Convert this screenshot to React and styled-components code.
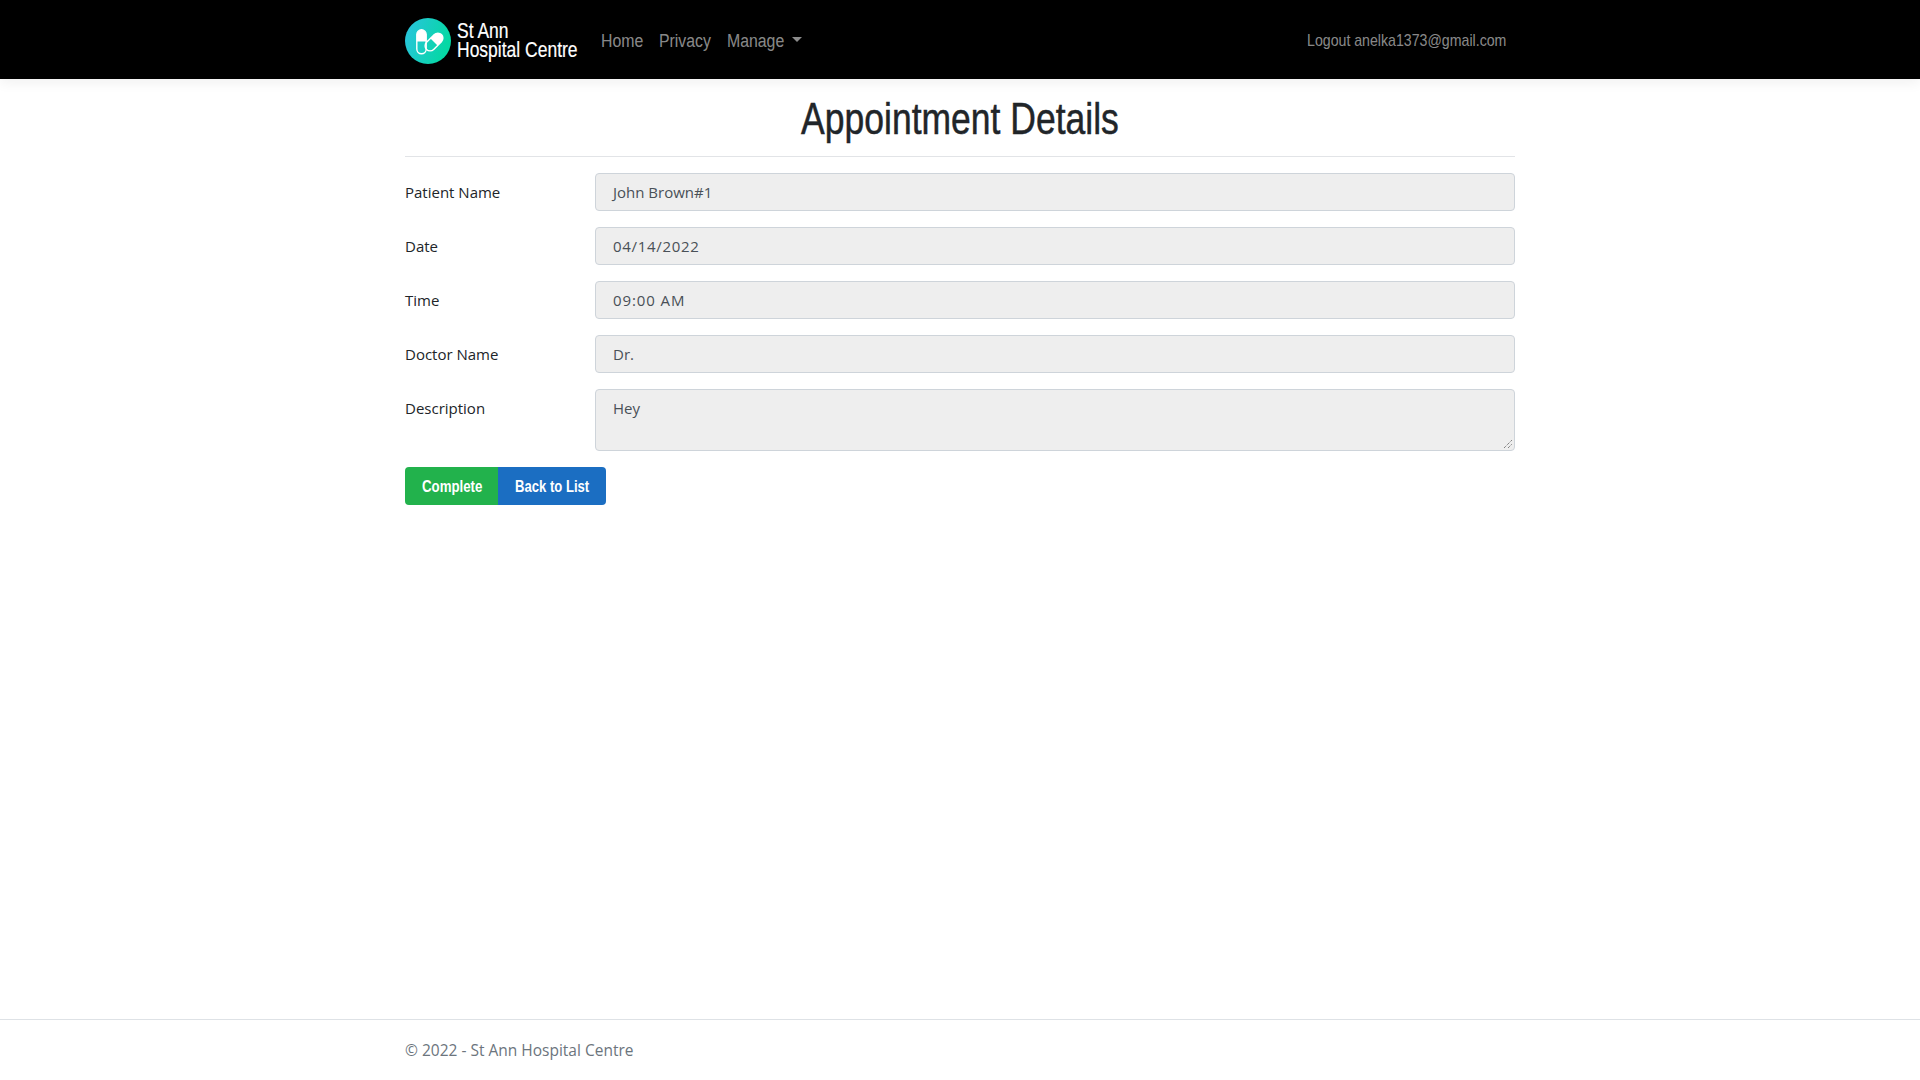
import React from 'react';
import styled, { createGlobalStyle } from 'styled-components';

const narrowFont = '"Liberation Sans", Arial, sans-serif';

const GlobalStyle = createGlobalStyle`
  html, body { margin: 0; padding: 0; height: 100%; background: #fff; }
  body {
    font-family: "Open Sans", "Noto Sans", sans-serif;
    font-size: 16px;
    color: #212529;
  }
  * { box-sizing: border-box; }
`;

const Page = styled.div`
  height: 1080px;
  display: flex;
  flex-direction: column;
  overflow: hidden;
`;

const NavBar = styled.nav`
  height: 79px;
  flex: none;
  background: #000;
  box-shadow: 0 4px 12px rgba(0, 0, 0, 0.06);
`;

const NavInner = styled.div`
  width: 1110px;
  height: 100%;
  margin: 0 auto;
  display: flex;
  align-items: center;
  font-family: ${narrowFont};
`;

// no condensed family is installed, so the narrow text is squeezed to its measured width
const Squeezed = styled.span`
  display: block;
  width: ${(p) => p.$w}px;
  white-space: nowrap;
  transform: scaleX(${(p) => p.$sx});
  transform-origin: left center;
`;

const Brand = styled.a`
  display: flex;
  align-items: center;
  gap: 6px;
  margin-right: 23px;
  padding-top: 3px;
  color: #fff;
`;

const BrandText = styled.div`
  font-size: 22px;
  line-height: 19px;
  margin-top: -2px;
  -webkit-text-stroke: 0.2px #fff;
`;

const NavLink = styled.a`
  font-size: 18px;
  color: rgba(255, 255, 255, 0.55);
  margin-right: 16px;
  display: flex;
  align-items: center;
  padding-top: 3px;
`;

const Caret = styled.span`
  display: block;
  margin-left: 9px;
  margin-top: -3px;
  border-top: 5px solid rgba(255, 255, 255, 0.55);
  border-left: 5px solid transparent;
  border-right: 5px solid transparent;
`;

const UserLink = styled(NavLink)`
  margin-left: auto;
  margin-right: 9px;
  font-size: 17px;
`;

const Main = styled.main`
  width: 1110px;
  margin: 0 auto;
  flex: 1;
`;

const TitleBar = styled.div`
  height: 78px;
  border-bottom: 1px solid #e2e4e7;
`;

const Title = styled.h1`
  margin: 0;
  text-align: center;
  font-family: ${narrowFont};
  font-weight: 400;
  font-size: 44px;
  line-height: 80px;
  color: #212529;
  -webkit-text-stroke: 0.5px #212529;
  transform: scaleX(0.807);
`;

const Form = styled.form`
  margin-top: 16px;
  display: flex;
  flex-direction: column;
  gap: 16px;
`;

const Row = styled.div`
  display: grid;
  grid-template-columns: 190px 920px;
  align-items: start;
`;

const Label = styled.label`
  font-size: 15px;
  line-height: 38px;
  height: 38px;
`;

const Field = styled.div`
  height: ${(p) => (p.$tall ? '62px' : '38px')};
  background: #eeeeee;
  border: 1px solid #ced4da;
  border-radius: 4px;
  padding: 6px 17px;
  font-size: 15px;
  line-height: 24px;
  letter-spacing: ${(p) => p.$spacing || '0'};
  color: #495057;
  position: relative;
`;

const Grip = styled.svg`
  position: absolute;
  right: 1px;
  bottom: 1px;
  width: 10px;
  height: 10px;
`;

const Buttons = styled.div`
  display: flex;
`;

const Button = styled.a`
  width: ${(p) => p.$w}px;
  height: 38px;
  display: flex;
  align-items: center;
  padding: 2px 0 0 17px;
  font-family: ${narrowFont};
  font-weight: 700;
  font-size: 17px;
  color: #fff;
  background: ${(p) => p.$bg};
  border-radius: ${(p) => p.$radius};
`;

const Footer = styled.footer`
  height: 61px;
  flex: none;
  border-top: 1px solid #dee2e6;
`;

const FooterInner = styled.div`
  width: 1110px;
  margin: 0 auto;
  line-height: 60px;
  font-size: 15.5px;
  color: #6c757d;
`;

function Logo() {
  return (
    <svg width="46" height="46" viewBox="0 0 46 46">
      <defs>
        <linearGradient id="logoGrad" x1="0" y1="0" x2="1" y2="0.3">
          <stop offset="0" stopColor="#2bc3e0" />
          <stop offset="1" stopColor="#05d8a4" />
        </linearGradient>
      </defs>
      <circle cx="23" cy="23" r="23" fill="url(#logoGrad)" />
      <rect x="11.8" y="11.8" width="9.4" height="24" rx="4.7" fill="none" stroke="#fff" strokeWidth="1.4" />
      <path d="M11.8 16.5a4.7 4.7 0 0 1 9.4 0V23.5H11.8z" fill="#fff" />
      <g transform="rotate(45 29 24)">
        <rect x="24" y="13.5" width="10" height="21" rx="5" fill="none" stroke="#fff" strokeWidth="1.4" />
        <path d="M24 18.5a5 5 0 0 1 10 0V24H24z" fill="#fff" />
      </g>
    </svg>
  );
}

export default function App() {
  return (
    <Page>
      <GlobalStyle />
      <NavBar>
        <NavInner>
          <Brand>
            <Logo />
            <BrandText>
              <Squeezed $w={121} $sx={0.795}>St Ann</Squeezed>
              <Squeezed $w={121} $sx={0.795}>Hospital Centre</Squeezed>
            </BrandText>
          </Brand>
          <NavLink><Squeezed $w={42} $sx={0.88}>Home</Squeezed></NavLink>
          <NavLink><Squeezed $w={52} $sx={0.88}>Privacy</Squeezed></NavLink>
          <NavLink><Squeezed $w={56} $sx={0.88}>Manage</Squeezed><Caret /></NavLink>
          <UserLink><Squeezed $w={199} $sx={0.833}>Logout anelka1373@gmail.com</Squeezed></UserLink>
        </NavInner>
      </NavBar>
      <Main>
        <TitleBar><Title>Appointment Details</Title></TitleBar>
        <Form>
          <Row><Label>Patient Name</Label><Field>John Brown#1</Field></Row>
          <Row><Label>Date</Label><Field $spacing="0.7px">04/14/2022</Field></Row>
          <Row><Label>Time</Label><Field $spacing="0.9px">09:00 AM</Field></Row>
          <Row><Label>Doctor Name</Label><Field>Dr.</Field></Row>
          <Row>
            <Label>Description</Label>
            <Field $tall>
              Hey
              <Grip viewBox="0 0 10 10">
                <path d="M1 9L9 1M5 9L9 5" stroke="#555" strokeWidth="1" strokeDasharray="1 1" />
              </Grip>
            </Field>
          </Row>
          <Buttons>
            <Button $w={93} $bg="#22b24c" $radius="4px 0 0 4px"><Squeezed $w={60} $sx={0.78}>Complete</Squeezed></Button>
            <Button $w={108} $bg="#1b6ec2" $radius="0 4px 4px 0"><Squeezed $w={74} $sx={0.77}>Back to List</Squeezed></Button>
          </Buttons>
        </Form>
      </Main>
      <Footer><FooterInner>© 2022 - St Ann Hospital Centre</FooterInner></Footer>
    </Page>
  );
}
